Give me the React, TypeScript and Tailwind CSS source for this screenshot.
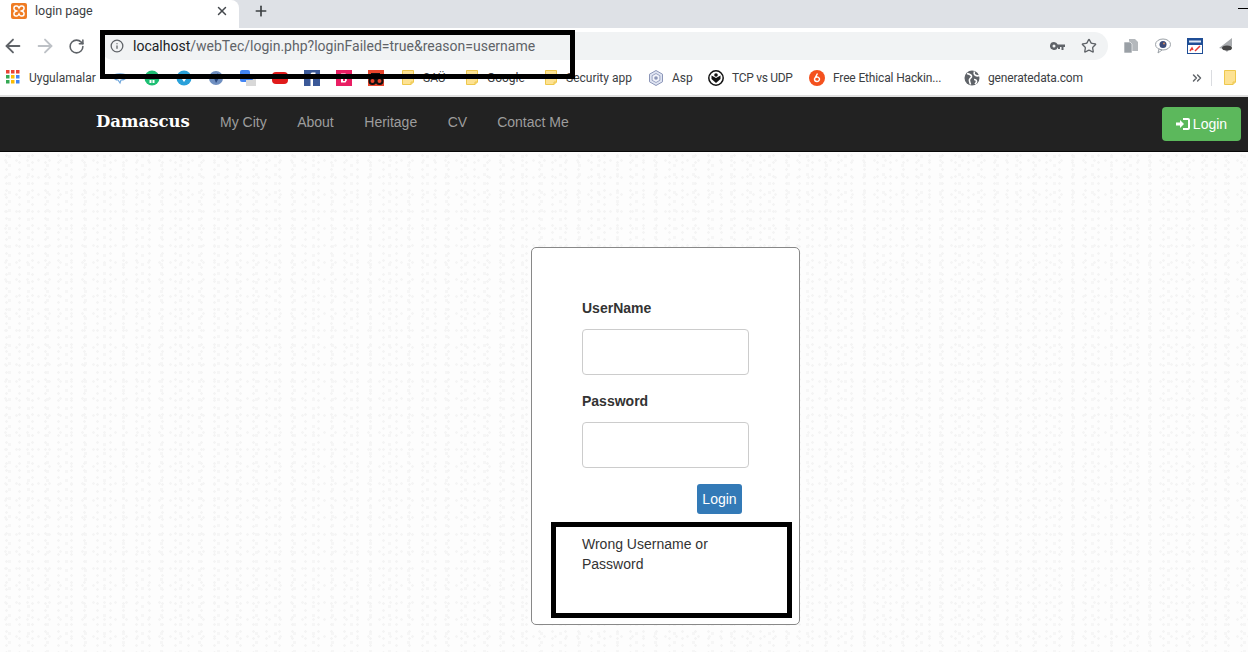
import React from "react";
import { ArrowLeft, ArrowRight, RotateCw, Info, Star, X, Plus, ChevronsRight } from "lucide-react";

const Folder = () => (
  <svg width="12" height="15" viewBox="0 0 12 15" className="mx-[1px] shrink-0">
    <path d="M.5.5h11v11.500l-2.500 2.500H.5z" fill="#fde293" stroke="#eec84c" />
    <path d="M9 14.500V12h2.500" fill="none" stroke="#eec84c" />
  </svg>
);

const Fav = ({ children }: { children: React.ReactNode }) => (
  <svg width="16" height="16" viewBox="0 0 16 16" className="shrink-0">{children}</svg>
);

const Mark = ({ icon, label, className }: { icon: React.ReactNode; label: string; className: string }) => (
  <div className={`flex items-center gap-[8px] ${className}`}>
    {icon}
    <span className="whitespace-nowrap">{label}</span>
  </div>
);

export default function App() {
  return (
    <div className="relative h-[652px] w-[1248px] overflow-hidden bg-white font-['Liberation_Sans',sans-serif] text-[14px] text-[#333]">
      {/* tab strip */}
      <div className="flex h-[28px] bg-[#dee1e6]">
        <div className="flex w-[239px] items-center rounded-tr-lg bg-white pb-[6px] pl-[11px] pr-[10px]">
          <svg width="16" height="16" viewBox="0 0 16 16" className="shrink-0">
            <rect width="16" height="16" rx="2" fill="#ef7b22" />
            <path d="M3 5Q3 3 5 3H6Q7 3 8 5 9 3 10 3H11Q13 3 13 5V6Q13 7 10.500 8 13 9 13 10V11Q13 13 11 13H10Q9 13 8 11 7 13 6 13H5Q3 13 3 11V10Q3 9 5.500 8 3 7 3 6Z" fill="none" stroke="#fff" strokeWidth="1.500" />
          </svg>
          <span className="ml-[8px] flex-1 font-['Roboto',sans-serif] text-[12.5px] text-[#3c4043]">login page</span>
          <X size={14} strokeWidth={2.5} className="text-[#45494d]" />
        </div>
        <div className="flex items-center pb-[6px] pl-[14px]">
          <Plus size={16} strokeWidth={2.5} className="text-[#3c4043]" />
        </div>
        <div className="ml-auto mt-[8px] h-px w-[10px] bg-black" />
      </div>
      {/* toolbar */}
      <div className="flex h-[36px] items-center bg-white">
        <ArrowLeft size={22} strokeWidth={2} className="ml-[2px] text-[#5f6368]" />
        <ArrowRight size={22} strokeWidth={2} className="ml-[10px] text-[#bdc1c6]" />
        <RotateCw size={17} strokeWidth={2.2} className="ml-[12px] text-[#5f6368]" />
        <div className="ml-[15px] flex h-[28px] w-[1008px] items-center rounded-full bg-[#f1f3f4] pl-[10px] pr-[11px]">
          <Info size={14} strokeWidth={2.2} className="shrink-0 text-[#5f6368]" />
          <span className="ml-[9px] flex-1 font-['Roboto',sans-serif] text-[14px] text-[#5f6368]">
            <span className="text-[#202124]">localhost</span>/webTec/login.php?loginFailed=true&amp;reason=username
          </span>
          <svg width="15" height="9" viewBox="0 0 15 9" className="shrink-0">
            <path d="M4 0a4 4 0 0 1 3.700 2.500H15V5h-1.500v3h-2V5H10v2H8V5.500h-.3A4 4 0 1 1 4 0zm0 2.500a1.500 1.500 0 1 0 0 3 1.500 1.500 0 0 0 0-3z" fill="#5f6368" />
          </svg>
          <Star size={16} strokeWidth={2} className="ml-[16px] shrink-0 text-[#5f6368]" />
        </div>
        <div className="ml-[15px] flex items-center gap-[16px]">
          <svg width="16" height="16" viewBox="0 0 16 16" className="shrink-0">
            <path d="M6 1h6l3 3v9H6z" fill="#b4b8bc" />
            <path d="M1 4h6l2 2v9H1z" fill="#9aa0a6" stroke="#fff" strokeWidth=".6" />
          </svg>
          <svg width="16" height="16" viewBox="0 0 16 16" className="shrink-0">
            <ellipse cx="8" cy="6.500" rx="7.500" ry="5.500" fill="#fff" stroke="#9aa0a6" />
            <path d="M4 11l-1 4 4-3z" fill="#fff" stroke="#9aa0a6" />
            <circle cx="8" cy="6.500" r="3.500" fill="#3a4a78" />
            <circle cx="9" cy="5.500" r="1" fill="#d98a5a" />
          </svg>
          <svg width="16" height="16" viewBox="0 0 16 16" className="shrink-0">
            <rect width="16" height="16" fill="#1f4e96" />
            <rect x="2" y="2.500" width="12" height="2" fill="#dfe8f5" />
            <rect x="1" y="7" width="14" height="8" fill="#fff" />
            <path d="M3 13l2-3 1 2M8 13l5-5" stroke="#e53935" strokeWidth="1.500" fill="none" />
          </svg>
          <svg width="16" height="16" viewBox="0 0 16 16" className="shrink-0">
            <path d="M13 0L4 7 0 10l5 1 3 3 5-6z" fill="#a8abae" />
            <ellipse cx="8" cy="10" rx="5" ry="2.500" fill="#444" />
          </svg>
        </div>
      </div>
      {/* bookmarks */}
      <div className="flex h-[33px] items-center border-b-2 border-[#e0e0e0] bg-white pb-[4px] pl-[6px] font-['Roboto',sans-serif] text-[12px] text-[#3c4043]">
        <Mark className="w-[106px]" label="Uygulamalar" icon={
          <svg width="15" height="15" viewBox="0 0 15 15" className="shrink-0">
            {[["#ea4335",0,0],["#ea4335",5,0],["#ea4335",10,0],["#34a853",0,5],["#fbbc05",5,5],["#4285f4",10,5],["#34a853",0,10],["#fbbc05",5,10],["#4285f4",10,10]].map(([c,x,y],i)=>(
              <rect key={i} x={x as number} y={y as number} width="3.500" height="3.500" fill={c as string} />
            ))}
          </svg>} />
        <div className="flex w-[289px] items-center gap-[16px]">
          <Fav><path d="M1 6c1-3 13-3 14 0-1 3-4 4-6 4l-1 3-2-3C4 10 2 9 1 6z" fill="none" stroke="#6ea6dc" strokeWidth="1.200" /></Fav>
          <Fav><circle cx="8" cy="8" r="7.500" fill="#1dbf73" /><path d="M5.500 10h2V13h-2zM8.500 10h2V13h-2z" fill="#fff" /></Fav>
          <Fav><circle cx="8" cy="8" r="7.500" fill="#2aa1da" /><path d="M4 6h8l-4 6z" fill="#fff" /></Fav>
          <Fav><circle cx="8" cy="8" r="7" fill="#6f8fc0" /><path d="M10 3l1 5-3 5-2-5z" fill="#2c4a80" /></Fav>
          <Fav><rect x="0" y="0" width="10" height="12" rx="2" fill="#4285f4" /><rect x="6" y="7" width="10" height="9" fill="#d8d8d8" /><path d="M6 6h5l2 4H6z" fill="#4285f4" /></Fav>
          <Fav><rect x="0" y="2" width="16" height="12" rx="4" fill="#e01b1b" /></Fav>
          <Fav><rect width="16" height="16" fill="#3b5998" /><path d="M9 16V9h2.500V6.500H9V5h2.500V2.500H8C7 2.500 6.500 3.500 6.500 5v1.500H5V9h1.500v7z" fill="#fff" /></Fav>
          <Fav><rect width="16" height="16" fill="#e91e63" /><path d="M5 3.500h4.500l1.500 2-1 2.500 1 2-1.500 2.500H5zM7 9v2h2V9z" fill="#fff" fillRule="evenodd" /></Fav>
          <Fav><rect width="16" height="16" fill="#e8452c" /><path d="M3 3h9v2H3z" fill="#111" /><circle cx="4.500" cy="11" r="3" fill="none" stroke="#111" strokeWidth="2" /><circle cx="11.500" cy="11" r="3" fill="none" stroke="#111" strokeWidth="2" /></Fav>
        </div>
        <Mark className="w-[64px]" label="SAÜ" icon={<Folder />} />
        <Mark className="w-[79px]" label="Google" icon={<Folder />} />
        <Mark className="w-[104px]" label="Security app" icon={<Folder />} />
        <Mark className="w-[60px]" label="Asp" icon={
          <Fav>
            <path d="M8 .5l6.500 3.700v7.600L8 15.500l-6.500-3.700V4.200z" fill="#dfe4f2" stroke="#8c96b8" />
            <path d="M8 3.500l3.900 2.200v4.600L8 12.500l-3.900-2.200V5.700z" fill="#f2f4fa" stroke="#9aa3c2" />
            <circle cx="8" cy="8" r="1.800" fill="#8c96b8" />
          </Fav>} />
        <Mark className="w-[101px] tracking-[-0.3px]" label="TCP vs UDP" icon={
          <Fav>
            <circle cx="8" cy="8" r="7.200" fill="#fff" stroke="#111" strokeWidth="1.500" />
            <path d="M3.500 5.500L8 8l4.500-2.500V9L8 13 3.500 9z" fill="#111" />
            <circle cx="8" cy="5" r="1.800" fill="#111" />
          </Fav>} />
        <Mark className="w-[155px] tracking-[-0.15px]" label="Free Ethical Hackin..." icon={
          <Fav>
            <circle cx="8" cy="8" r="8" fill="#f4511e" />
            <path d="M8.500 3.500L5.500 9a2.500 2.500 0 1 0 5 0 2.500 2.500 0 0 0-4-1.500" fill="none" stroke="#fff" strokeWidth="1.400" />
          </Fav>} />
        <Mark className="w-[226px] tracking-[-0.15px]" label="generatedata.com" icon={
          <Fav>
            <circle cx="8" cy="8" r="7.500" fill="#5f6368" />
            <path d="M3 3.500c2 .5 4 1 4.500 2.500S6 8 5.500 9.500s.5 3 1 5M10.500 1.500C10 3 9.500 4 11 5s3 1 4 .5M10 9.500c1 0 2.500.5 2.500 2s-1 2-1.500 2.500" fill="none" stroke="#fff" strokeWidth="1.600" />
          </Fav>} />
        <ChevronsRight size={14} strokeWidth={2.5} className="text-[#5f6368]" />
        <div className="ml-[7px] h-[16px] w-px bg-[#dadce0]" />
        <div className="ml-[11px]"><Folder /></div>
      </div>
      {/* navbar */}
      <div className="flex h-[55px] items-center border-b border-[#080808] bg-[#222] pl-[96px] pr-[7px]">
        <div className="flex items-center pb-[4px]">
          <span className="w-[124px] font-['DejaVu_Serif',serif] text-[16.5px] font-bold text-white">Damascus</span>
          <a className="mr-[30.5px] text-[#9d9d9d]">My City</a>
          <a className="mr-[30.5px] text-[#9d9d9d]">About</a>
          <a className="mr-[30.5px] text-[#9d9d9d]">Heritage</a>
          <a className="mr-[30px] text-[#9d9d9d]">CV</a>
          <a className="text-[#9d9d9d]">Contact Me</a>
        </div>
        <button className="ml-auto flex h-[34px] w-[79px] items-center justify-center rounded-[4px] bg-[#5cb85c] text-white">
          <svg width="15" height="14" viewBox="0 0 15 14" className="shrink-0"><path d="M0 5.500h4V3l4 4-4 4V8.500H0z M7 1h5a2 2 0 0 1 2 2v8a2 2 0 0 1-2 2H7v-2h5V3H7z" fill="#fff" /></svg>
          <span className="ml-[2px]">Login</span>
        </button>
      </div>
      {/* page with faint paper texture */}
      <div className="h-[500px] bg-[#fdfdfd] bg-[radial-gradient(circle,#f4f4f4_1px,transparent_1.5px),radial-gradient(circle,#f5f5f5_1px,transparent_1.5px),radial-gradient(circle,#f6f6f6_1.5px,transparent_2px)] bg-[length:13px_7px,11px_17px,19px_9px] pl-[531px] pt-[95px]">
        <div className="h-[378px] w-[269px] rounded-[5px] border border-[#888] bg-white px-[50px] pt-[50px]">
          <label className="block font-bold leading-[20px]">UserName</label>
          <div className="mt-[11px] h-[46px] w-[167px] rounded-[4px] border border-[#ccc] bg-white" />
          <label className="mt-[16px] block font-bold leading-[20px]">Password</label>
          <div className="mt-[11px] h-[46px] w-[167px] rounded-[4px] border border-[#ccc] bg-white" />
          <div className="mt-[16px] flex w-[160px] justify-end">
            <button className="h-[30px] w-[45px] rounded-[3px] bg-[#337ab7] text-white">Login</button>
          </div>
          <p className="mt-[20px] w-[160px] leading-[20px]">Wrong Username or Password</p>
        </div>
      </div>
      {/* annotation rectangles */}
      <div className="pointer-events-none absolute left-[100px] top-[30px] h-[49px] w-[475px] border-[5px] border-black" />
      <div className="pointer-events-none absolute left-[551px] top-[522px] h-[96px] w-[241px] border-[5px] border-black" />
    </div>
  );
}
